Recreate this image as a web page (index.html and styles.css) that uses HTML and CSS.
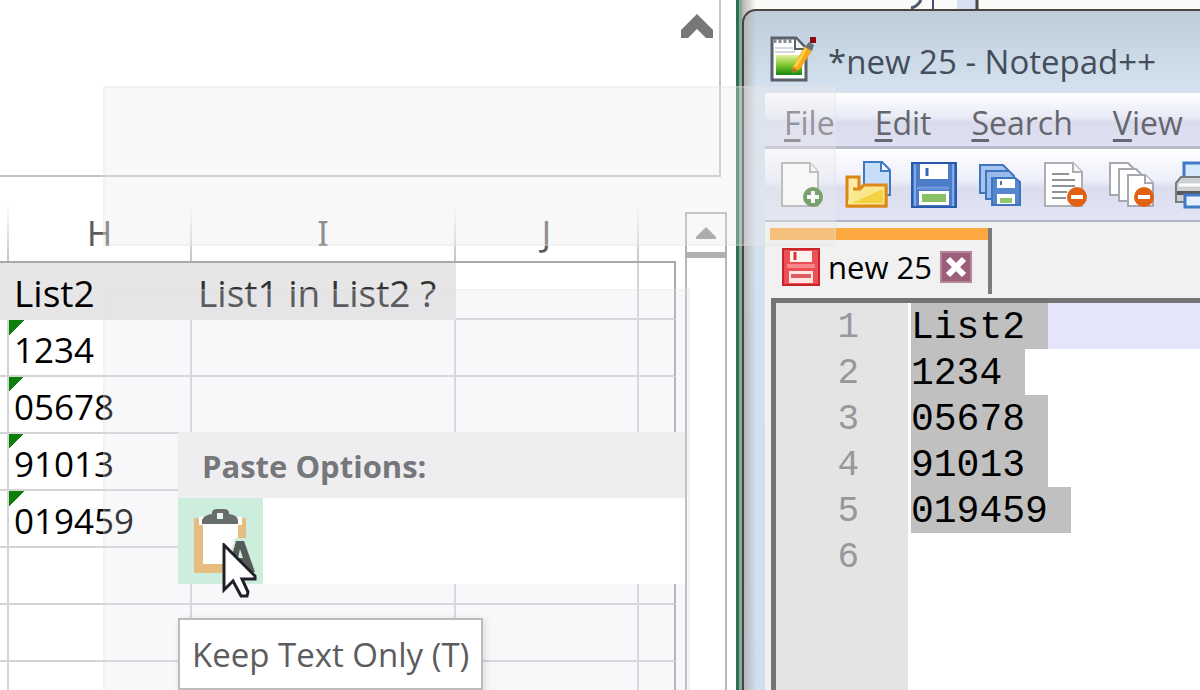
FILE: index.html
```html
<!DOCTYPE html>
<html lang="en">
<head>
<meta charset="utf-8">
<title>Paste Options</title>
<link rel="stylesheet" href="styles.css">
</head>
<body>
<div class="desktop">
  <main class="excel">
    <div class="formula-bar">
      <button class="collapse" aria-label="Collapse formula bar">
        <svg width="34" height="26" viewBox="0 0 34 26"><path d="M17 0 L33 16 V24 H26 L17 15 L8 24 H1 V16 Z" fill="#777"/></svg>
      </button>
    </div>
    <div class="sheet">
      <table class="grid">
        <colgroup><col class="c-edge"><col class="c-h"><col class="c-i"><col class="c-j"><col></colgroup>
        <thead>
          <tr><th></th><th>H</th><th>I</th><th>J</th><th></th></tr>
        </thead>
        <tbody>
          <tr class="titles"><td class="fill"></td><td class="fill">List2</td><td class="fill soft">List1 in List2 ?</td><td></td><td></td></tr>
          <tr><td></td><td class="flag">1234</td><td></td><td></td><td></td></tr>
          <tr><td></td><td class="flag">05678</td><td></td><td></td><td></td></tr>
          <tr><td></td><td class="flag">91013</td><td></td><td></td><td></td></tr>
          <tr><td></td><td class="flag">019459</td><td></td><td></td><td></td></tr>
          <tr><td></td><td></td><td></td><td></td><td></td></tr>
          <tr><td></td><td></td><td></td><td></td><td></td></tr>
          <tr><td></td><td></td><td></td><td></td><td></td></tr>
        </tbody>
      </table>
      <div class="scrollbar">
        <button class="scroll-up" aria-label="Scroll up">
          <svg width="20" height="12" viewBox="0 0 20 12"><path d="M10 0 L20 10 V12 H0 V10 Z" fill="#8c8c8c"/></svg>
        </button>
        <div class="track"></div>
      </div>
    </div>
  </main>

  <section class="behind">
    <div class="behind-strip">
      <svg width="120" height="10" viewBox="0 0 120 10"><path d="M34 0 Q30 7 24 8" fill="none" stroke="#4b5a6b" stroke-width="3"/><path d="M46 0 V10" stroke="#54456a" stroke-width="2"/><rect x="70" width="19" height="10" fill="#d5e0f2"/><path d="M90 0 V10" stroke="#4c4644" stroke-width="3"/></svg>
    </div>
    <div class="notepad">
      <header class="titlebar">
        <svg width="48" height="48" viewBox="0 0 48 48">
          <defs><linearGradient id="leaf" x1="0" y1="0" x2="0" y2="1"><stop offset="0" stop-color="#e4f29a"/><stop offset=".5" stop-color="#7fc62c"/><stop offset="1" stop-color="#168a10"/></linearGradient></defs>
          <path d="M3 3 H27 L37 13 V45 H3 Z" fill="#fff" stroke="#59616b" stroke-width="3"/>
          <path d="M6 13 H24 M6 17 H26" stroke="#d5dade" stroke-width="2"/>
          <path d="M6 4 V8 M11 4 V8 M16 4 V8 M21 4 V8" stroke="#858c94" stroke-width="3"/>
          <path d="M26 3 V14 H36" fill="#f5f5f5" stroke="#59616b" stroke-width="2"/>
          <rect x="7" y="20" width="26" height="20" fill="url(#leaf)"/>
          <path d="M23 38 L24 31 L36 11 L43 16 L31 34 Z" fill="#f4a91f"/>
          <path d="M25 31 L36 13 L38 14 L28 32 Z" fill="#ffd34a"/>
          <path d="M23 38 L24 33 L28 35 Z" fill="#ab6820"/>
          <path d="M36 12 L40 7 L45 10 L43 16 Z" fill="#68717d"/>
          <rect x="41" y="2" width="6" height="6" fill="#8e0717"/>
        </svg>
        <h1>*new 25 - Notepad++</h1>
      </header>
      <div class="client">
        <nav class="menu">
          <button><u>F</u>ile</button><button><u>E</u>dit</button><button><u>S</u>earch</button><button><u>V</u>iew</button>
        </nav>
        <div class="toolbar">
          <button aria-label="New"><svg viewBox="0 0 46 48"><path d="M3 2 H31 L39 11 V45 H3 Z" fill="#fdfefa" stroke="#a5a8a6" stroke-width="2"/><path d="M31 2 V11 H39" fill="#fff" stroke="#a5a8a6" stroke-width="2"/><circle cx="34" cy="36" r="10" fill="#3d7a2c"/><path d="M34 30 V42 M28 36 H40" stroke="#fff" stroke-width="4"/></svg></button>
          <button aria-label="Open"><svg viewBox="0 0 46 48"><path d="M19 1 H37 L45 9 V34 H19 Z" fill="#c6defa" stroke="#4179c4" stroke-width="2"/><path d="M36 2 V10 H44" fill="#fff" stroke="#4179c4" stroke-width="2"/><path d="M2 45 V16 H14 V26 H41 V45 Z" fill="#ffe9a8" stroke="#d98518" stroke-width="3"/><path d="M9 28 H15 L19 24 H41 V45 H3 V40 Z" fill="#fae88e"/><path d="M8 28 H15 L19 24 H41 V45 H2" fill="none" stroke="#dd881a" stroke-width="3"/><path d="M7 42 L38 28 V42 Z" fill="#f5d244"/></svg></button>
          <button aria-label="Save"><svg viewBox="0 0 46 48"><rect x="1" y="2" width="44" height="44" fill="#4c7cc9" stroke="#2859aa" stroke-width="2"/><path d="M4 3 V45 M42 3 V45" stroke="#83a9e2" stroke-width="2"/><rect x="9" y="3" width="28" height="15" fill="#fff"/><path d="M16 7 V15" stroke="#3367b4" stroke-width="3"/><path d="M6 27 H38" stroke="#6f98d8" stroke-width="3"/><rect x="8" y="30" width="30" height="14" fill="#fff"/><rect x="11" y="33" width="24" height="8" fill="#8ac165"/></svg></button>
          <button aria-label="Save all"><svg viewBox="0 0 46 48"><g stroke="#3f74be" stroke-width="2"><path d="M3 4 H26 L31 9 V32 H3 Z" fill="#a6c5ee"/><path d="M9 10 H32 L37 15 V38 H9 Z" fill="#98bbea"/><path d="M15 17 H38 L43 21 V44 H15 Z" fill="#5686cc"/></g><rect x="20" y="18" width="18" height="9" fill="#fff"/><path d="M24 20 V24" stroke="#3f74be" stroke-width="2"/><rect x="20" y="33" width="18" height="10" fill="#fff"/><rect x="23" y="37" width="12" height="5" fill="#8fc86a"/></svg></button>
          <button aria-label="Close"><svg viewBox="0 0 46 48"><path d="M2 2 H30 L39 11 V45 H2 Z" fill="#fff" stroke="#adafb4" stroke-width="2"/><path d="M30 2 V11 H39" fill="#f6f6f6" stroke="#adafb4" stroke-width="2"/><path d="M9 13 H26 M9 19 H32 M9 25 H32 M9 31 H24 M9 37 H23" stroke="#8f9298" stroke-width="2"/><circle cx="34" cy="36" r="10" fill="#e16113"/><path d="M28 36 H40" stroke="#fff" stroke-width="4"/></svg></button>
          <button aria-label="Close all"><svg viewBox="0 0 46 48"><g fill="#fff" stroke="#a7a9ae" stroke-width="2"><path d="M1 2 H19 L26 9 V34 H1 Z"/><path d="M10 8 H27 L34 15 V40 H10 Z"/><path d="M19 14 H36 L44 22 V45 H19 Z"/><path d="M36 14 V22 H44"/></g><circle cx="35" cy="36" r="10" fill="#e16113"/><path d="M29 36 H41" stroke="#fff" stroke-width="4"/></svg></button>
          <button aria-label="Print"><svg viewBox="0 0 46 48"><path d="M9 18 V2 H37 V18" fill="#d5e8fd" stroke="#4179c4" stroke-width="3"/><path d="M1 22 L6 16 H40 L45 22 V41 H1 Z" fill="#ced0d2" stroke="#777a7e" stroke-width="2"/><path d="M2 32 H44" stroke="#55585c" stroke-width="4"/><path d="M10 34 H36 V46 H10 Z" fill="#e6f1ff" stroke="#4179c4" stroke-width="3"/><path d="M4 24 H42" stroke="#fff" stroke-width="3"/></svg></button>
        </div>
        <div class="tabs">
          <div class="tab">
            <svg width="38" height="38" viewBox="0 0 38 38"><rect x="1" y="1" width="36" height="36" fill="#ec5055" stroke="#c9242c" stroke-width="2"/><rect x="8" y="3" width="22" height="11" fill="#fff1ee"/><path d="M13 4 V12" stroke="#d9343b" stroke-width="3"/><path d="M5 18 H33" stroke="#f8898b" stroke-width="4"/><rect x="7" y="23" width="24" height="12" fill="#ffe4e2"/><path d="M9 28 H29" stroke="#dc5c60" stroke-width="4"/></svg>
            <span>new 25</span>
            <button class="tab-close" aria-label="Close tab"><svg width="32" height="32" viewBox="0 0 32 32"><rect width="32" height="32" fill="#9b5f7a"/><rect x="1" y="1" width="30" height="30" fill="none" stroke="#b58498" stroke-width="2"/><path d="M8 8 L24 24 M24 8 L8 24" stroke="#fff" stroke-width="6"/></svg></button>
          </div>
        </div>
        <div class="editor">
          <ol class="numbers"><li>1</li><li>2</li><li>3</li><li>4</li><li>5</li><li>6</li></ol>
          <div class="code">
            <div class="line current"><span>List2 </span></div>
            <div class="line"><span>1234 </span></div>
            <div class="line"><span>05678 </span></div>
            <div class="line"><span>91013 </span></div>
            <div class="line"><span>019459 </span></div>
            <div class="line"></div>
          </div>
        </div>
      </div>
    </div>
  </section>

  <div class="ghost ghost-top"></div>
  <div class="ghost ghost-bottom"></div>

  <div class="paste-menu">
    <h2>Paste Options:</h2>
    <button class="paste-text" aria-label="Keep Text Only">
      <svg width="85" height="86" viewBox="0 0 85 86">
        <path d="M16 20 H68 V75 H16 Z" fill="#e5bd81"/>
        <path d="M21 19 H64 V27 H60 V66 H25 V27 H21 Z" fill="#fff"/>
        <path d="M24 26 V22 Q26 17 34 16 V14 Q35 11 39 11 H46 Q50 11 51 14 V16 Q59 17 60 22 V26 Z" fill="#666d6a"/>
        <rect x="39" y="15" width="6" height="6" fill="#e7f5ee"/>
        <path d="M52 76 V58 L57 40 H68 L80 80 H52 Z" fill="#cdeedd"/>
        <path d="M58 43 H66 L77 74 H69 L67 66 H56 L55 54 Z" fill="#555b59"/>
        <path d="M60 60 L62 51 L65 60 Z" fill="#cdeedd"/>
      </svg>
    </button>
  </div>
  <svg class="cursor" width="36" height="56" viewBox="0 0 36 56"><path d="M2 2 V47 L11 38 L19 53 H25 L26 49 L20 36 H33 V33 Z" fill="#fff" stroke="#20202a" stroke-width="3"/></svg>
  <div class="tooltip" role="tooltip">Keep Text Only (T)</div>
</div>
</body>
</html>
```
FILE: styles.css
```css
* { box-sizing: border-box; }
body { margin: 0; font-family: "Open Sans", "Noto Sans", sans-serif; background: #fff; }
button { margin: 0; padding: 0; border: 0; background: none; font: inherit; color: inherit; }
svg { display: block; flex: none; }

.desktop {
  position: relative;
  display: grid;
  grid-template-columns: minmax(0, 742fr) minmax(0, 458fr);
  height: 100vh;
  overflow: hidden;
}

/* Spreadsheet */
.excel {
  display: flex;
  flex-direction: column;
  min-height: 0;
  border-right: 3px solid #86ab9a;
  box-shadow: inset -3px 0 #2f7055;
  padding-right: 12px;
}
.formula-bar {
  display: flex;
  justify-content: flex-end;
  align-items: flex-start;
  height: 177px;
  flex: none;
  margin-right: 6px;
  padding: 14px 5px 0 0;
  border-right: 2px solid #c4c4c4;
  border-bottom: 2px solid #c4c4c4;
}
.sheet { display: flex; gap: 9px; flex: 1; min-height: 0; padding-top: 28px; }
.grid {
  flex: 1;
  align-self: flex-start;
  table-layout: fixed;
  border-collapse: separate;
  border-spacing: 0;
  min-width: 0;
}
.c-edge { width: 9px; }
.c-h, .c-j { width: 183px; }
.c-i { width: 264px; }
.grid th {
  height: 58px;
  padding: 0 2px 0 0;
  border-bottom: 2px solid #a8a8aa;
  background: linear-gradient(#fff, #c4c4c6) right / 2px 100% no-repeat;
  font-family: "Noto Sans", sans-serif;
  font-size: 34px;
  line-height: 56px;
  font-weight: 400;
  color: #5c5c5c;
}
.grid th:last-child { background: none; }
.grid td {
  height: 57px;
  padding: 4px 0 0 5px;
  border-right: 2px solid #d4d4d6;
  border-bottom: 2px solid #d4d4d6;
  font-size: 35px;
  line-height: 51px;
  white-space: nowrap;
  color: #000;
}
.grid td:first-child { padding: 0; }
.grid td:last-child { border-right-color: #a8a8aa; }
.grid .titles td { font-size: 37px; }
.grid .fill { background: #e6e6e6; border-color: #e6e6e6; }
.grid .soft { padding-left: 6px; color: #333; }
.grid .flag { background: linear-gradient(135deg, #0a800a 50%, transparent 50%) left top / 15px 15px no-repeat; }
.scrollbar { display: flex; flex-direction: column; width: 42px; flex: none; padding-top: 7px; }
.scroll-up {
  display: flex;
  align-items: center;
  justify-content: center;
  height: 46px;
  border: 2px solid #b0b0b0;
  border-bottom: 6px solid #b0b0b0;
}
.track { flex: 1; border: solid #b8b8b8; border-width: 0 2px; }

/* Editor window */
.behind { display: flex; flex-direction: column; min-height: 0; background: linear-gradient(90deg, #b4b4b0, #fafaf8 14px); }
.behind-strip { height: 9px; flex: none; overflow: hidden; padding-left: 145px; }
.notepad {
  display: flex;
  flex-direction: column;
  flex: 1;
  min-height: 0;
  padding-left: 21px;
  overflow: hidden;
  border: solid #4b4340;
  border-width: 2px 0 0 2px;
  border-radius: 14px 0 0 0;
  background: linear-gradient(90deg, #b5b5b8, rgba(200, 212, 230, 0) 12px), linear-gradient(#bfcddb, #d5e2ef 82px, #d0def0);
}
.titlebar { display: flex; align-items: center; gap: 11px; height: 82px; flex: none; padding: 20px 0 0 4px; }
.titlebar svg { align-self: flex-start; margin-top: 4px; }
.titlebar h1 { margin: 0; font-size: 33px; line-height: 46px; font-weight: 400; white-space: nowrap; color: #434d5b; }
.client { display: flex; flex-direction: column; flex: 1; min-height: 0; background: #f1f1f1; }
.menu {
  display: flex;
  gap: 40px;
  height: 56px;
  flex: none;
  padding: 4px 0 0 19px;
  border-bottom: 3px solid #bbbccb;
  background: linear-gradient(#fff, #e9ebf6 45%, #dadcee 55%, #dfe0f1);
  font-size: 32px;
  line-height: 52px;
  color: #66666e;
}
.menu u { text-decoration-thickness: 3px; text-underline-offset: 4px; text-decoration-skip-ink: none; }
.toolbar {
  display: flex;
  height: 73px;
  flex: none;
  padding-left: 4px;
  overflow: hidden;
  border-bottom: 2px solid #b2b5c5;
  background: linear-gradient(#fff, #eceefa 45%, #dadded 55%, #e3e5f6);
}
.toolbar button { display: flex; align-items: center; justify-content: center; flex: 0 0 66px; }
.toolbar svg { width: 46px; height: 48px; }
.tabs { display: flex; height: 76px; flex: none; padding: 6px 0 4px 5px; }
.tab {
  display: flex;
  align-items: center;
  gap: 8px;
  padding: 12px 16px 0 12px;
  border-right: 4px solid #7c7c7c;
  background: linear-gradient(#faa83f, #faa83f) top / 100% 12px no-repeat;
  font-size: 31px;
  line-height: 46px;
  white-space: nowrap;
  color: #000;
}
.editor {
  display: flex;
  gap: 3px;
  flex: 1;
  min-height: 0;
  margin-left: 6px;
  overflow: hidden;
  border: solid #747474;
  border-width: 5px 0 0 5px;
  background: #fff;
  font-family: "Liberation Mono", monospace;
  font-size: 38px;
}
.numbers { width: 132px; flex: none; margin: 0; padding: 0 49px 0 0; list-style: none; text-align: right; background: #e4e4e4; color: #97979c; font-size: 36px; }
.numbers li { height: 46px; padding-top: 4px; line-height: 42px; }
.code { flex: 1; min-width: 0; }
.line { height: 46px; white-space: pre; color: #000; }
.line span { display: inline-block; height: 46px; padding-top: 4px; line-height: 42px; vertical-align: top; background: #c0c0c0; }
.current { background: #e4e4fa; }

/* Floating layers */
.ghost { position: absolute; left: 103px; border: 2px solid rgba(222, 222, 225, .25); }
.ghost-top { top: 86px; width: 733px; height: 160px; background: rgba(236, 236, 237, .35); }
.ghost-bottom { top: 289px; width: 587px; bottom: -2px; background: rgba(225, 227, 238, .24); }
.paste-menu { position: absolute; left: 178px; top: 432px; width: 507px; background: #fff; }
.paste-menu h2 { margin: 0; padding: 2px 24px 0; font-size: 31px; line-height: 64px; font-weight: 700; color: #76777a; background: #eeeef0; }
.paste-text { display: block; background: #cdeedd; }
.cursor { position: absolute; left: 222px; top: 543px; }
.tooltip {
  position: absolute;
  left: 178px;
  top: 618px;
  padding: 2px 12px 0;
  border: 2px solid #bcbcbe;
  background: #fff;
  box-shadow: 2px 2px 8px rgba(0, 0, 0, .12);
  font-size: 33px;
  line-height: 66px;
  white-space: nowrap;
  color: #5c5c60;
}
```
